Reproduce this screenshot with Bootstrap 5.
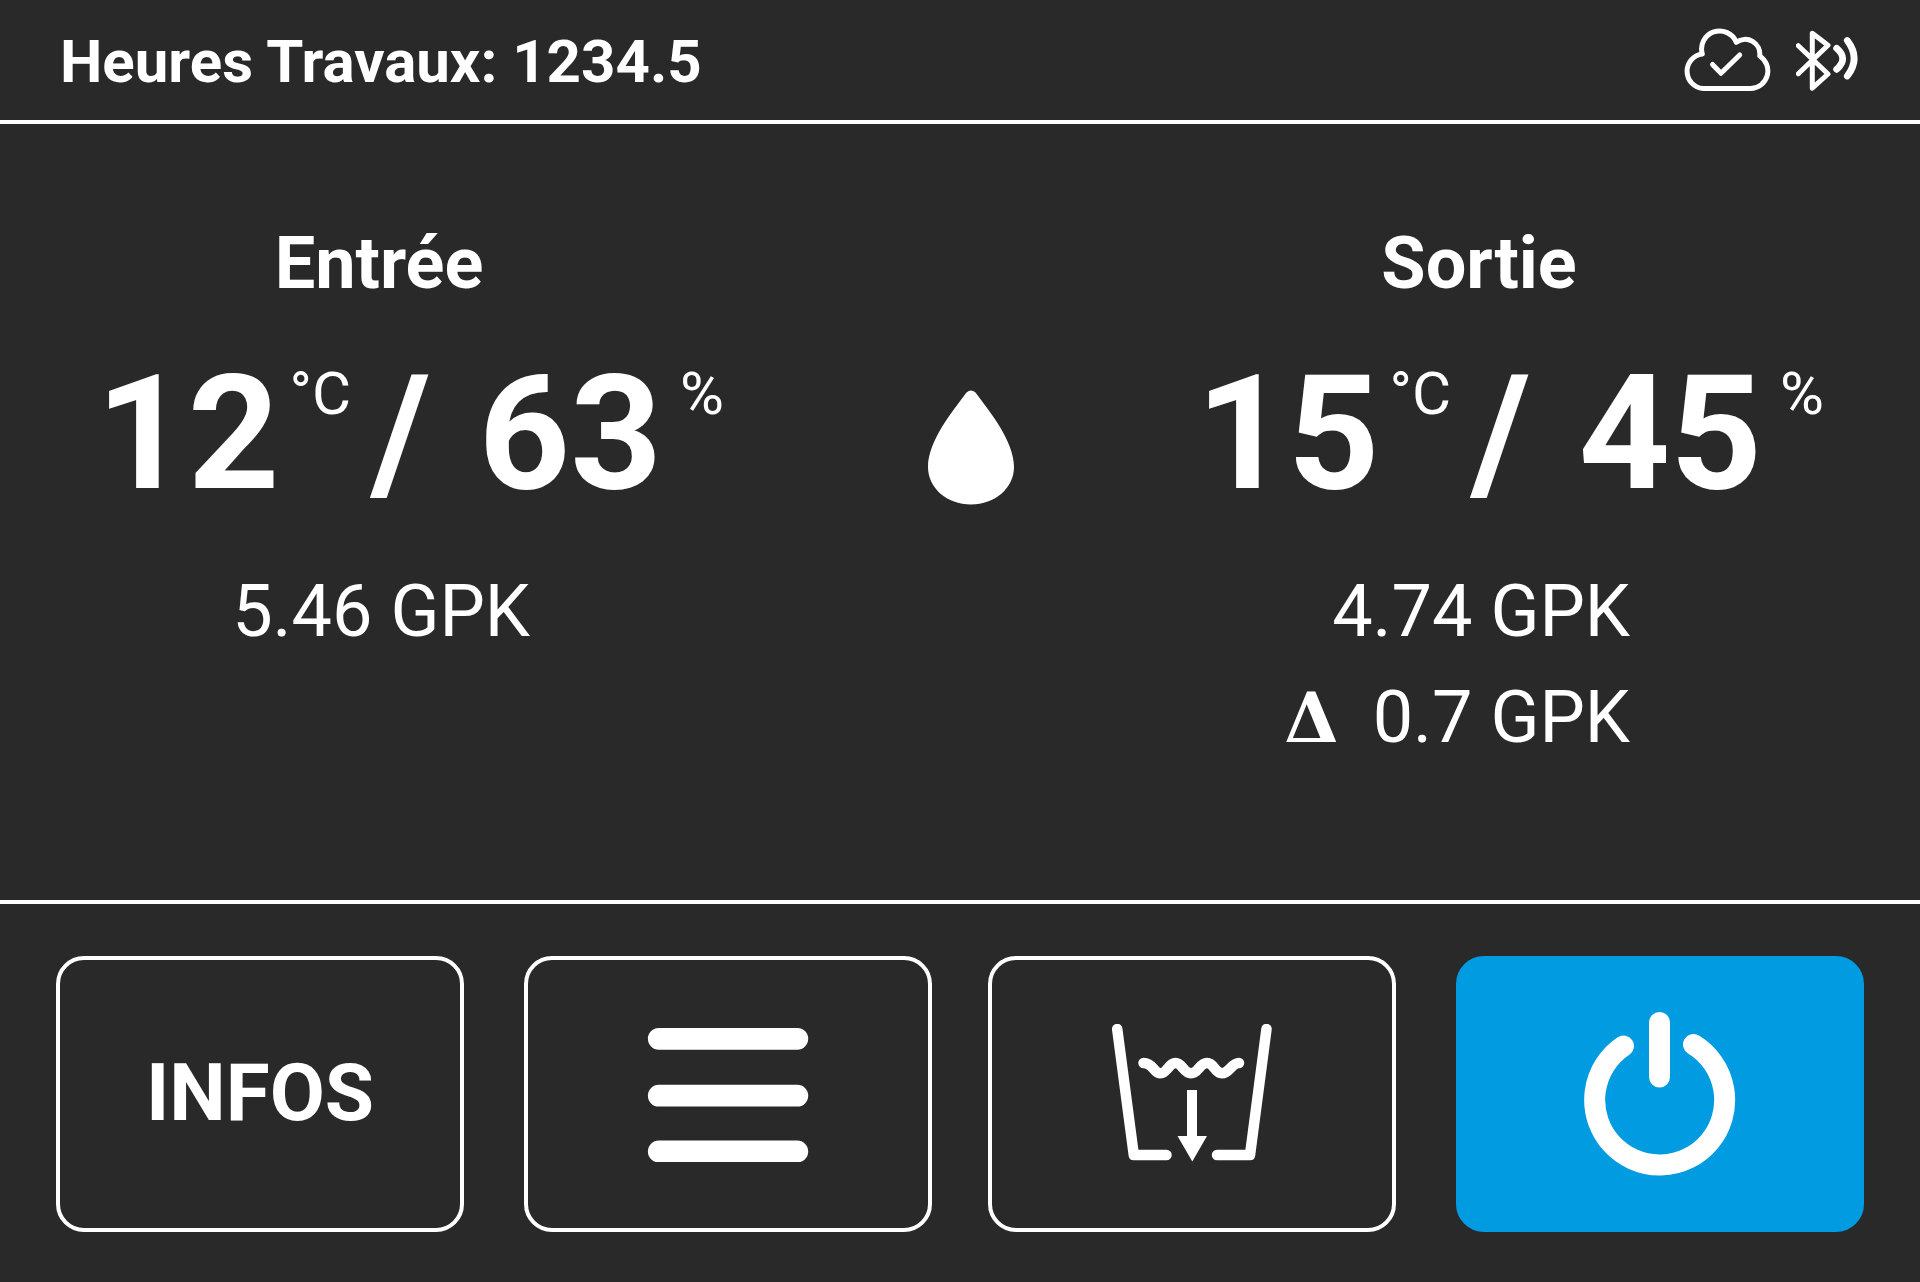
<!DOCTYPE html>
<html lang="fr" class="h-100">
<head>
<meta charset="utf-8">
<meta name="viewport" content="width=device-width, initial-scale=1">
<title>Heures Travaux</title>
<link href="https://cdn.jsdelivr.net/npm/bootstrap@5.3.0/dist/css/bootstrap.min.css" rel="stylesheet">
<style>
  :root { --panel: #292929; --accent: #009be1; }
  body { background: var(--panel); color: #fff; font-family: Roboto, "Liberation Sans", sans-serif; }
  .status-bar { padding: 0 60px; height: 124px; border-bottom: 4px solid #fff; }
  .status-title { font-size: 60px; line-height: 72px; font-weight: 700; padding-top: 3px; }
  .status-icons { gap: 24px; }
  .readings { padding: 98px 96px 0; }
  .reading { display: grid; grid-template-columns: auto auto; column-gap: 18px; }
  .reading-title { font-size: 72px; line-height: 84px; font-weight: 700; }
  .reading-values { font-size: 160px; line-height: 188px; font-weight: 700; margin-top: 34px; }
  .unit { font-size: 60px; line-height: 72px; font-weight: 400; margin-top: 18px; }
  .unit-inner { margin-left: 10px; margin-right: 20px; }
  .unit-outer { margin-top: 52px; }
  .slash { margin-right: 48px; }
  .reading-gpk { font-size: 72px; line-height: 84px; margin-top: 42px; padding-right: 132px; row-gap: 22px; }
  .delta-row { gap: 34px; }
  .delta-sign { font-family: "DejaVu Serif", serif; font-weight: 700; font-size: 70px; }
  .drop { margin-top: 168px; margin-left: 22px; }
  .actions { border-top: 4px solid #fff; padding: 52px 56px 50px; gap: 56px; }
  .action-pair { gap: 60px; flex: 1 1 0; }
  .action { flex: 1 1 0; height: 276px; border: 4px solid #fff; border-radius: 28px; color: #fff; font-size: 80px; line-height: 96px; font-weight: 700; }
  .action:hover { background: #3a3a3a; color: #fff; border-color: #fff; }
  .action-power, .action-power:hover { background: var(--accent); border-color: var(--accent); }
  .action-text { padding-bottom: 3px; }
</style>
</head>
<body class="min-vh-100 d-flex flex-column">
<header class="status-bar d-flex align-items-center justify-content-between">
  <h1 class="status-title m-0">Heures Travaux: 1234.5</h1>
  <div class="status-icons d-flex align-items-center">
    <svg width="89" height="66" viewBox="0 0 89 66" fill="none" stroke="#fff" stroke-width="5" stroke-linecap="round" stroke-linejoin="round" role="img" aria-label="Cloud connecté"><path d="M20 61.600A17.400 17.400 0 0 1 19.300 27A18 18 0 0 1 53.300 15.300A14.700 14.700 0 0 1 76.700 29A17.700 17.700 0 0 1 67.600 61.600Z"/><path d="M29.500 37.500L38 46.300L56.700 28"/></svg>
    <svg width="64" height="62" viewBox="0 0 64 62" fill="none" stroke="#fff" stroke-linecap="round" stroke-linejoin="round" role="img" aria-label="Bluetooth actif"><path stroke-width="5" d="M2.300 16.700L32 45L16.300 59.200V4.300L32 16.300L2.300 44.700"/><path stroke-width="6.800" d="M40.700 19.300Q52.700 29.800 40.700 40.300M51.300 11.500Q65 29.500 51.300 47"/></svg>
  </div>
</header>

<main class="readings flex-grow-1 d-flex justify-content-between align-items-start">
  <section class="reading">
    <h2 class="reading-title text-center m-0">Entrée</h2><span></span>
    <div class="reading-values d-flex align-items-start"><span>12</span><span class="unit unit-inner">°C</span><span class="slash">/</span><span>63</span></div>
    <span class="unit unit-outer">%</span>
    <div class="reading-gpk d-flex flex-column align-items-end"><span>5.46 GPK</span></div>
  </section>
  <svg class="drop flex-shrink-0" width="86" height="116" viewBox="0 0 86 116" fill="#fff" role="img" aria-label="Humidité"><path d="M38.500 2.500Q43-1.500 47.500 2.500C62 22 86 51 86 77C86 98 67 114.500 43 114.500S0 98 0 77C0 51 24 22 38.500 2.500Z"/></svg>
  <section class="reading">
    <h2 class="reading-title text-center m-0">Sortie</h2><span></span>
    <div class="reading-values d-flex align-items-start"><span>15</span><span class="unit unit-inner">°C</span><span class="slash">/</span><span>45</span></div>
    <span class="unit unit-outer">%</span>
    <div class="reading-gpk d-flex flex-column align-items-end">
      <span>4.74 GPK</span>
      <span class="delta-row d-flex align-items-baseline"><span class="delta-sign">Δ</span><span>0.7 GPK</span></span>
    </div>
  </section>
</main>

<nav class="actions d-flex" aria-label="Commandes">
  <div class="action-pair d-flex">
    <button type="button" class="action btn p-0 d-flex align-items-center justify-content-center"><span class="action-text">INFOS</span></button>
    <button type="button" class="action btn p-0 d-flex align-items-center justify-content-center" aria-label="Menu">
      <svg width="162" height="136" viewBox="0 0 162 136" stroke="#fff" stroke-width="21.800" stroke-linecap="round"><path d="M11.800 12.800H150.300M11.800 69.700H150.300M11.800 125.500H150.300"/></svg>
    </button>
  </div>
  <div class="action-pair d-flex">
    <button type="button" class="action btn p-0 d-flex align-items-center justify-content-center" aria-label="Vidange">
      <svg width="160" height="140" viewBox="0 1 160 140" fill="none" stroke="#fff" stroke-width="10.500" stroke-linecap="round" stroke-linejoin="round"><path d="M5.200 6L21.800 132H54.500M154.500 6L138 132H105"/><path d="M31.500 40C41.500 40 41.500 50.300 48.500 50.300S56.500 40 63.500 40S71.500 50.300 79 50.300S87.500 40 95 40S102.500 50.300 110 50.300S119.500 40 127 40"/><path stroke="none" fill="#fff" d="M75 67H85V113H95L80.300 138.500L65.500 113H75Z"/></svg>
    </button>
    <button type="button" class="action action-power btn p-0 d-flex align-items-center justify-content-center" aria-label="Marche/Arrêt">
      <svg width="152" height="164" viewBox="0 0 152 164" fill="none" stroke="#fff" stroke-width="21" stroke-linecap="round"><path d="M75.500 10.500V65M39.500 34A65 65 0 1 0 109.500 32.500"/></svg>
    </button>
  </div>
</nav>
<script src="https://cdn.jsdelivr.net/npm/bootstrap@5.3.0/dist/js/bootstrap.bundle.min.js"></script>
</body>
</html>
